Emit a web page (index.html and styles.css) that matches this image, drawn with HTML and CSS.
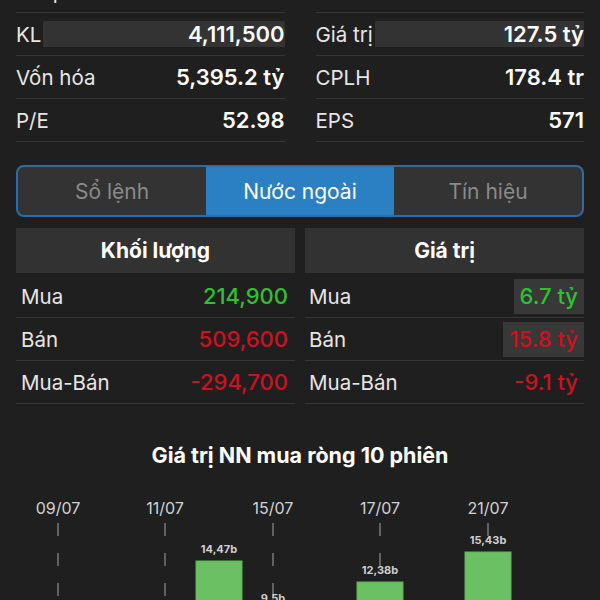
FILE: index.html
```html
<!DOCTYPE html>
<html lang="vi">
<head>
<meta charset="utf-8">
<title>Nước ngoài</title>
<link rel="stylesheet" href="styles.css">
</head>
<body>
<div class="stats">
  <div class="col">
    <div class="row"><span class="lbl">Thấp</span><span class="val">29.80</span></div>
    <div class="row"><span class="lbl">KL</span><span class="val hl">4,111,500</span></div>
    <div class="row"><span class="lbl">Vốn hóa</span><span class="val">5,395.2 tỷ</span></div>
    <div class="row"><span class="lbl">P/E</span><span class="val">52.98</span></div>
  </div>
  <div class="col">
    <div class="row"><span class="lbl">Cao</span><span class="val">31.10</span></div>
    <div class="row"><span class="lbl">Giá trị</span><span class="val hl">127.5 tỷ</span></div>
    <div class="row"><span class="lbl">CPLH</span><span class="val">178.4 tr</span></div>
    <div class="row"><span class="lbl">EPS</span><span class="val">571</span></div>
  </div>
</div>

<div class="tabs">
  <div class="tab">Sổ lệnh</div>
  <div class="tab active">Nước ngoài</div>
  <div class="tab">Tín hiệu</div>
</div>

<div class="tables">
  <div class="table left">
    <div class="thead">Khối lượng</div>
    <div class="tbody">
      <div class="trow"><span class="tl">Mua</span><span class="tv up">214,900</span></div>
      <div class="trow"><span class="tl">Bán</span><span class="tv down">509,600</span></div>
      <div class="trow"><span class="tl">Mua-Bán</span><span class="tv down">-294,700</span></div>
    </div>
  </div>
  <div class="table right">
    <div class="thead">Giá trị</div>
    <div class="tbody">
      <div class="trow"><span class="tl">Mua</span><span class="tv up box">6.7 tỷ</span></div>
      <div class="trow"><span class="tl">Bán</span><span class="tv down box">15.8 tỷ</span></div>
      <div class="trow"><span class="tl">Mua-Bán</span><span class="tv down">-9.1 tỷ</span></div>
    </div>
  </div>
</div>

<h2 class="chart-title">Giá trị NN mua ròng 10 phiên</h2>

<div class="chart">
  <svg width="600" height="140" viewBox="0 0 600 140">
    <g class="grid">
      <line x1="58" y1="43" x2="58" y2="140"/>
      <line x1="165" y1="43" x2="165" y2="140"/>
      <line x1="273" y1="43" x2="273" y2="140"/>
      <line x1="380" y1="43" x2="380" y2="140"/>
      <line x1="488" y1="43" x2="488" y2="140"/>
    </g>
    <g class="dates">
      <text x="58" y="34">09/07</text>
      <text x="165" y="34">11/07</text>
      <text x="273" y="34">15/07</text>
      <text x="380" y="34">17/07</text>
      <text x="488" y="34">21/07</text>
    </g>
    <g class="bars">
      <rect x="196" y="81" width="46" height="60"/>
      <rect x="357" y="102" width="46" height="40"/>
      <rect x="465" y="72" width="46" height="70"/>
    </g>
    <g class="vals">
      <text x="219" y="73">14,47b</text>
      <text x="273" y="122">9,5b</text>
      <text x="380" y="94">12,38b</text>
      <text x="488" y="64">15,43b</text>
    </g>
  </svg>
</div>
</body>
</html>
```

FILE: styles.css
```css
html, body {
  margin: 0;
  padding: 0;
  background: #1f1f1f;
  color: #ececec;
  font-family: Inter, "Noto Sans", "DejaVu Sans", sans-serif;
  overflow: hidden;
}

.stats {
  display: grid;
  grid-template-columns: 1fr 1fr;
  column-gap: 31px;
  padding: 0 16px;
  margin-top: -30px;
}

.row {
  display: flex;
  align-items: center;
  height: 43px;
  box-sizing: border-box;
  border-bottom: 1px solid #363636;
  font-size: 20.5px;
}

.lbl {
  color: #e6e6e6;
  font-weight: 400;
  white-space: nowrap;
}

.val {
  flex: 1;
  text-align: right;
  font-weight: 600;
  font-size: 22px;
  color: #fafafa;
}

.val.hl {
  background: #333333;
  height: 26px;
  line-height: 26px;
  margin-left: 2px;
}

.tabs {
  display: flex;
  margin: 23px 16px 0;
  height: 52px;
  box-sizing: border-box;
  border: 2px solid #2c6da3;
  border-radius: 8px;
  overflow: hidden;
  background: #333333;
}

.tab {
  flex: 1;
  display: flex;
  align-items: center;
  justify-content: center;
  font-size: 21px;
  color: #8a8a8a;
}

.tab.active {
  background: #2b7fc3;
  color: #ffffff;
}

.tables {
  display: grid;
  grid-template-columns: 1fr 1fr;
  column-gap: 10px;
  padding: 0 16px;
  margin-top: 11px;
}

.thead {
  height: 45px;
  display: flex;
  align-items: center;
  justify-content: center;
  background: #323232;
  font-size: 21px;
  font-weight: 700;
  color: #ffffff;
}

.tbody {
  padding-top: 2px;
}

.trow {
  display: flex;
  align-items: center;
  height: 43px;
  box-sizing: border-box;
  border-bottom: 1px solid #363636;
  font-size: 20.5px;
}

.left .trow {
  padding: 0 7px 0 5px;
}

.right .trow {
  padding: 0 6px 0 4px;
}

.tl {
  flex: 1;
  color: #e6e6e6;
}

.tv {
  font-weight: 500;
  font-size: 22px;
}

.tv.box {
  background: #383838;
  height: 35px;
  line-height: 35px;
  padding: 0 6px 0 6px;
  margin-right: -6px;
}

.up { color: #2fc12f; }
.down { color: #cf1020; }

.chart-title {
  margin: 39px 0 0;
  text-align: center;
  font-size: 21.5px;
  line-height: 24px;
  font-weight: 700;
  color: #ffffff;
}

.chart {
  margin-top: 13px;
  height: 140px;
}

.chart svg {
  display: block;
}

.grid line {
  stroke: #7a7a7a;
  stroke-width: 1.5;
  stroke-dasharray: 13 17;
}

.dates text {
  fill: #d2d2d2;
  font-size: 16px;
  text-anchor: middle;
  font-family: Inter, "Noto Sans", sans-serif;
}

.bars rect {
  fill: #6bc063;
  stroke: #5bb653;
  stroke-width: 1;
}

.vals text {
  fill: #cfcfcf;
  font-size: 11px;
  font-weight: 700;
  text-anchor: middle;
  font-family: Inter, "Noto Sans", sans-serif;
}
```
